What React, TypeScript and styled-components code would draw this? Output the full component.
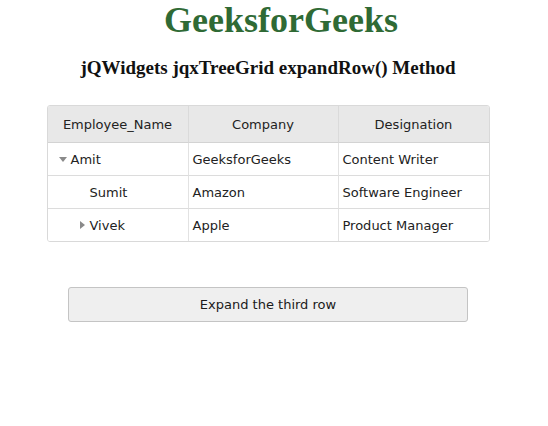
import * as React from "react";
import styled, { createGlobalStyle } from "styled-components";

const GlobalStyle = createGlobalStyle`
  html, body {
    margin: 0;
    padding: 0;
    background: #ffffff;
  }
`;

const Page = styled.div`
  width: 520px;
  margin-left: 8px;
  display: flex;
  flex-direction: column;
  align-items: center;
  font-family: "Liberation Serif", "Times New Roman", serif;
`;

const Title = styled.h1`
  margin: 0;
  padding-left: 26px;
  font-size: 36px;
  line-height: 40px;
  color: #2f6a35;
  font-weight: bold;
`;

const Subtitle = styled.h3`
  margin: 17px 0 0;
  font-size: 19px;
  line-height: 22px;
  color: #111;
  font-weight: bold;
`;

const Grid = styled.div`
  margin-top: 26px;
  display: grid;
  grid-template-columns: 141px 150px 150px;
  border: 1px solid #d9d9d9;
  border-radius: 3px;
  overflow: hidden;
  font-family: "DejaVu Sans", Verdana, sans-serif;
  font-size: 13px;
  color: #222;
`;

const HeaderCell = styled.div<{ $last?: boolean }>`
  height: 36px;
  display: flex;
  align-items: center;
  justify-content: center;
  background: #e8e8e8;
  border-bottom: 1px solid #d3d3d3;
  border-right: ${(p) => (p.$last ? "none" : "1px solid #dadada")};
`;

const Cell = styled.div<{ $last?: boolean; $bottom?: boolean }>`
  height: 32px;
  display: flex;
  align-items: center;
  padding-left: 4px;
  background: #fff;
  border-bottom: ${(p) => (p.$bottom ? "none" : "1px solid #dcdcdc")};
  border-right: ${(p) => (p.$last ? "none" : "1px solid #e2e2e2")};
`;

const Toggle = styled.span<{ $level: number }>`
  display: inline-flex;
  align-items: center;
  justify-content: center;
  width: 13px;
  margin-left: ${(p) => 5 + p.$level * 19}px;
  color: #888;
`;

const Name = styled.span`
  margin-left: 1px;
`;

const Button = styled.button`
  margin-top: 45px;
  width: 400px;
  height: 35px;
  border: 1px solid #c4c4c4;
  border-radius: 3px;
  background: #efefef;
  font-family: "DejaVu Sans", Verdana, sans-serif;
  font-size: 13px;
  color: #1a1a1a;
  cursor: pointer;
`;

type Row = {
  name: string;
  company: string;
  designation: string;
  level: number;
  toggle: "open" | "closed" | null;
};

const rows: Row[] = [
  { name: "Amit", company: "GeeksforGeeks", designation: "Content Writer", level: 0, toggle: "open" },
  { name: "Sumit", company: "Amazon", designation: "Software Engineer", level: 1, toggle: null },
  { name: "Vivek", company: "Apple", designation: "Product Manager", level: 1, toggle: "closed" },
];

function Arrow({ kind }: { kind: "open" | "closed" | null }) {
  if (kind === "open") {
    return (
      <svg width="8" height="5" viewBox="0 0 8 5">
        <path d="M0 0 L8 0 L4 5 Z" fill="#8a8a8a" />
      </svg>
    );
  }
  if (kind === "closed") {
    return (
      <svg width="5" height="8" viewBox="0 0 5 8">
        <path d="M0 0 L5 4 L0 8 Z" fill="#8a8a8a" />
      </svg>
    );
  }
  return null;
}

export default function App() {
  return (
    <Page>
      <GlobalStyle />
      <Title>GeeksforGeeks</Title>
      <Subtitle>jQWidgets jqxTreeGrid expandRow() Method</Subtitle>
      <Grid>
        <HeaderCell>Employee_Name</HeaderCell>
        <HeaderCell>Company</HeaderCell>
        <HeaderCell $last>Designation</HeaderCell>
        {rows.map((r, i) => {
          const bottom = i === rows.length - 1;
          return (
            <React.Fragment key={r.name}>
              <Cell $bottom={bottom}>
                <Toggle $level={r.level}>
                  <Arrow kind={r.toggle} />
                </Toggle>
                <Name>{r.name}</Name>
              </Cell>
              <Cell $bottom={bottom}>{r.company}</Cell>
              <Cell $bottom={bottom} $last>
                {r.designation}
              </Cell>
            </React.Fragment>
          );
        })}
      </Grid>
      <Button>Expand the third row</Button>
    </Page>
  );
}
